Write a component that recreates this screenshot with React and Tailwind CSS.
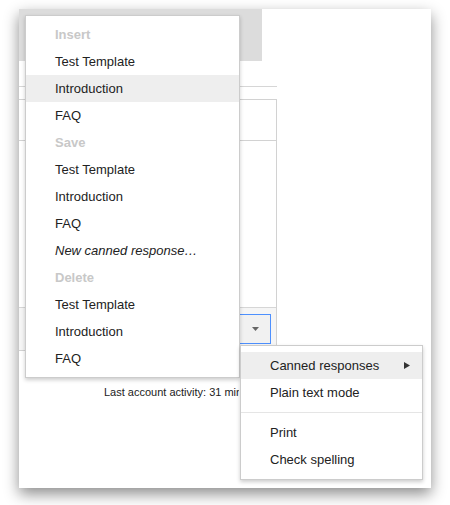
import React from "react";

const font = { fontFamily: '"Liberation Sans", Arial, sans-serif' };

function Header({ children }) {
  return (
    <div className="h-[27px] leading-[27px] pl-[29px] font-bold text-[#c8c8c8]">{children}</div>
  );
}

function Item({ children, active, italic, arrow }) {
  return (
    <div
      className={
        "h-[27px] leading-[27px] pl-[29px] pr-[12px] flex items-center justify-between text-[#222] " +
        (active ? "bg-[#eeeeee] " : "") +
        (italic ? "italic" : "")
      }
    >
      <span>{children}</span>
      {arrow && (
        <svg width="6" height="7" viewBox="0 0 6 7">
          <polygon points="0,0 6,3.5 0,7" fill="#333" />
        </svg>
      )}
    </div>
  );
}

export default function App() {
  return (
    <div className="relative w-[450px] h-[505px] bg-white text-[13px]" style={font}>
      <div className="absolute left-0 top-0 w-full h-full pt-[9px] pl-[19px]">
        <div className="w-[412px] h-[479px] bg-white shadow-[0_6px_14px_rgba(0,0,0,0.45)] flex flex-col">
          <div className="w-[243px] h-[52px] bg-[#dcdcdc]" />
          <div className="mt-[25px] w-[258px] border-t border-[#d6d6d6]" />
          <div className="mt-[12px] w-[258px] border-t border-r border-b border-[#d2d2d2] flex flex-col">
            <div className="h-[41px] border-b border-[#d2d2d2]" />
            <div className="h-[166px]" />
            <div className="h-[43px] border-t border-[#d6d6d6] bg-[#f5f5f5] flex justify-end pr-[5px] pt-[6px]">
              <div className="w-[32px] h-[30px] border border-[#4d90fe] bg-[#f1f1f1] flex items-center justify-center">
                <svg width="7" height="4" viewBox="0 0 7 4">
                  <polygon points="0,0 7,0 3.5,4" fill="#666" />
                </svg>
              </div>
            </div>
          </div>
          <div className="mt-[35px] ml-[85px] w-[135px] overflow-hidden text-[11px] leading-[13px] text-[#222] whitespace-nowrap">
            Last account activity: 31 minutes ago
          </div>
        </div>
      </div>

      <div className="absolute left-[25px] top-[15px] w-[215px] bg-white border border-[rgba(0,0,0,0.2)] shadow-[0_2px_4px_rgba(0,0,0,0.2)] py-[5px]">
        <Header>Insert</Header>
        <Item>Test Template</Item>
        <Item active>Introduction</Item>
        <Item>FAQ</Item>
        <Header>Save</Header>
        <Item>Test Template</Item>
        <Item>Introduction</Item>
        <Item>FAQ</Item>
        <Item italic>New canned response…</Item>
        <Header>Delete</Header>
        <Item>Test Template</Item>
        <Item>Introduction</Item>
        <Item>FAQ</Item>
      </div>

      <div className="absolute left-[240px] top-[345px] w-[183px] bg-white border border-[rgba(0,0,0,0.2)] shadow-[0_2px_4px_rgba(0,0,0,0.2)] py-[6px]">
        <Item active arrow>Canned responses</Item>
        <Item>Plain text mode</Item>
        <div className="my-[6px] h-px bg-[#e5e5e5]" />
        <Item>Print</Item>
        <Item>Check spelling</Item>
      </div>
    </div>
  );
}
